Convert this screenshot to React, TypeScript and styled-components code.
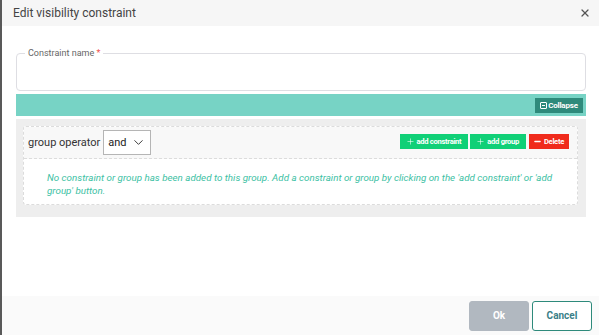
import React from 'react';
import styled, { createGlobalStyle } from 'styled-components';
import { X, ChevronDown, Plus, Minus } from 'lucide-react';

const GlobalStyle = createGlobalStyle`
  html, body {
    margin: 0;
    padding: 0;
    background: #595959;
    font-family: Roboto, "Liberation Sans", sans-serif;
  }
  * {
    box-sizing: border-box;
  }
`;

const Dialog = styled.div`
  margin-left: 2px;
  height: 335px;
  background: #fff;
  display: flex;
  flex-direction: column;
`;

const Header = styled.div`
  height: 26px;
  background: #f6f6f6;
  display: flex;
  align-items: center;
  justify-content: space-between;
  padding: 0 8px 0 11px;
`;

const Title = styled.span`
  font-size: 12px;
  color: #444;
`;

const CloseButton = styled.button`
  border: none;
  background: none;
  padding: 0;
  display: flex;
  color: #555;
  cursor: pointer;
`;

const Body = styled.div`
  flex: 1;
  padding: 0 13px 0 14px;
`;

const Field = styled.div`
  position: relative;
  margin-top: 27px;
  height: 38px;
  border: 1px solid #dedee3;
  border-radius: 4px;
`;

const FieldLabel = styled.span`
  position: absolute;
  top: -6px;
  left: 8px;
  padding: 0 3px;
  background: #fff;
  font-size: 9px;
  line-height: 11px;
  color: #666;
`;

const Required = styled.span`
  color: #ef5350;
`;

const TealBar = styled.div`
  margin-top: 3px;
  height: 22px;
  background: #77d3c5;
  display: flex;
  align-items: center;
  justify-content: flex-end;
  padding-right: 3px;
`;

const CollapseButton = styled.button`
  height: 15px;
  width: 48px;
  border: none;
  background: #2e8a7b;
  color: #fff;
  font-family: inherit;
  font-size: 8px;
  font-weight: 700;
  letter-spacing: -0.2px;
  display: flex;
  align-items: center;
  justify-content: center;
  gap: 1px;
  padding: 0;
`;

const BoxIcon = styled.span`
  display: inline-block;
  width: 7px;
  height: 7px;
  border: 1px solid #fff;
  border-radius: 1px;
  position: relative;
  &::after {
    content: '';
    position: absolute;
    left: 1px;
    right: 1px;
    top: 2px;
    height: 1px;
    background: #fff;
  }
`;

const GrayPanel = styled.div`
  margin-top: 3px;
  background: #eeeeee;
  padding: 7px 8px 12px 7px;
`;

const GroupBox = styled.div`
  border: 1px dashed #dcdcdc;
  border-radius: 3px;
  background: #fff;
`;

const GroupHeader = styled.div`
  height: 32px;
  background: #f8f8f8;
  border-bottom: 1px dashed #dcdcdc;
  display: flex;
  align-items: center;
  padding: 0 8px 0 4px;
`;

const OperatorLabel = styled.span`
  font-size: 11px;
  color: #333;
`;

const Select = styled.div`
  margin-left: 3px;
  width: 48px;
  height: 25px;
  border: 1px solid #b5b5b5;
  background: #fff;
  display: flex;
  align-items: center;
  justify-content: space-between;
  padding: 0 4px 0 4px;
  font-size: 11px;
  color: #222;
`;

const Actions = styled.div`
  margin-left: auto;
  margin-top: -3px;
  display: flex;
  gap: 2px;
`;

const ActionButton = styled.button<{ $danger?: boolean }>`
  height: 15px;
  border: none;
  padding: ${p => (p.$danger ? '0 5px 0 4px' : '0 7px 0 6px')};
  margin-left: ${p => (p.$danger ? '1px' : '0')};
  background: ${p => (p.$danger ? '#f02b1c' : '#10d077')};
  color: #fff;
  font-family: inherit;
  font-size: 7.6px;
  font-weight: 700;
  letter-spacing: -0.3px;
  display: flex;
  align-items: center;
  gap: 2px;
`;

const Message = styled.div`
  padding: 12px 14px 7px 23px;
  font-size: 9.8px;
  line-height: 13px;
  font-style: italic;
  color: #3dbfa4;
`;

const Footer = styled.div`
  height: 39px;
  background: #fafafa;
  display: flex;
  align-items: center;
  justify-content: flex-end;
  gap: 3px;
  padding-right: 7px;
`;

const FooterButton = styled.button<{ $primary?: boolean }>`
  width: 60px;
  height: 30px;
  border-radius: 3px;
  font-family: inherit;
  font-size: 10px;
  font-weight: 700;
  border: 1px solid ${p => (p.$primary ? '#b1b8c0' : '#2e8a7b')};
  background: ${p => (p.$primary ? '#b1b8c0' : '#fff')};
  color: ${p => (p.$primary ? '#fff' : '#3a7f88')};
`;

export default function App() {
  return (
    <>
      <GlobalStyle />
      <Dialog>
        <Header>
          <Title>Edit visibility constraint</Title>
          <CloseButton>
            <X size={12} strokeWidth={2.5} />
          </CloseButton>
        </Header>
        <Body>
          <Field>
            <FieldLabel>
              Constraint name <Required>*</Required>
            </FieldLabel>
          </Field>
          <TealBar>
            <CollapseButton>
              <BoxIcon />
              Collapse
            </CollapseButton>
          </TealBar>
          <GrayPanel>
            <GroupBox>
              <GroupHeader>
                <OperatorLabel>group operator</OperatorLabel>
                <Select>
                  and
                  <ChevronDown size={15} strokeWidth={1.4} />
                </Select>
                <Actions>
                  <ActionButton>
                    <Plus size={9} strokeWidth={1.5} />
                    add constraint
                  </ActionButton>
                  <ActionButton>
                    <Plus size={9} strokeWidth={1.5} />
                    add group
                  </ActionButton>
                  <ActionButton $danger>
                    <Minus size={9} strokeWidth={3.5} />
                    Delete
                  </ActionButton>
                </Actions>
              </GroupHeader>
              <Message>
                No constraint or group has been added to this group. Add a constraint or group by clicking on the 'add constraint' or 'add group' button.
              </Message>
            </GroupBox>
          </GrayPanel>
        </Body>
        <Footer>
          <FooterButton $primary>Ok</FooterButton>
          <FooterButton>Cancel</FooterButton>
        </Footer>
      </Dialog>
    </>
  );
}
